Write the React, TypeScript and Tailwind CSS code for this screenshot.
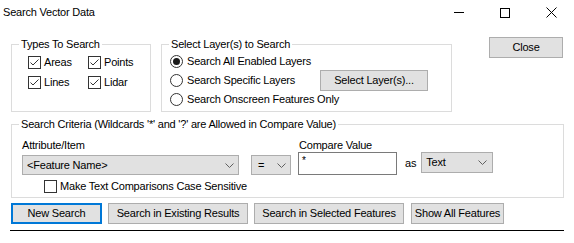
import React from "react";

const Chevron = () => (
  <svg width="9" height="5" viewBox="0 0 9 5" className="shrink-0">
    <polyline points="0.5,0.5 4.5,4.5 8.5,0.5" fill="none" stroke="#606060" strokeWidth="1" />
  </svg>
);

const Check = ({ checked, label }: { checked: boolean; label: string }) => (
  <div className="flex items-center h-[20px]">
    <div className="w-[13px] h-[13px] border border-[#333333] bg-white flex items-center justify-center shrink-0">
      {checked && (
        <svg width="11" height="11" viewBox="0 0 11 11">
          <polyline points="1.5,5.5 4,8 9.5,2.5" fill="none" stroke="#333333" strokeWidth="1" />
        </svg>
      )}
    </div>
    <span className="ml-[3px]">{label}</span>
  </div>
);

const Radio = ({ checked, label }: { checked: boolean; label: string }) => (
  <div className="flex items-center">
    <div className="w-[13px] h-[13px] rounded-full border border-[#333333] bg-white flex items-center justify-center shrink-0">
      {checked && <div className="w-[7px] h-[7px] rounded-full bg-[#1a1a1a]" />}
    </div>
    <span className="ml-[4px]">{label}</span>
  </div>
);

const Group = ({
  title,
  className,
  children,
}: {
  title: string;
  className: string;
  children: React.ReactNode;
}) => (
  <div className={"relative border border-[#dcdcdc] " + className}>
    <span className="absolute -top-[7px] left-[7px] px-[2px] bg-white leading-[13px] whitespace-nowrap">
      {title}
    </span>
    {children}
  </div>
);

const Btn = ({ label, className }: { label: string; className: string }) => (
  <button
    className={
      "h-[21px] bg-[#e1e1e1] border border-[#adadad] flex items-center justify-center leading-[13px] " +
      className
    }
  >
    {label}
  </button>
);

export default function App() {
  return (
    <div className="w-[574px] h-[243px] bg-white text-black text-[11px] leading-[13px] tracking-[-0.2px] font-['Liberation_Sans',Arial,sans-serif] overflow-hidden">
      {/* title bar */}
      <div className="flex h-[25px] items-center">
        <span className="pl-[3px] text-[11px]">Search Vector Data</span>
        <div className="ml-auto flex h-full">
          <div className="w-[46px] flex items-center justify-center">
            <div className="w-[10px] h-px bg-black" />
          </div>
          <div className="w-[46px] flex items-center justify-center">
            <div className="w-[10px] h-[10px] border border-black" />
          </div>
          <div className="w-[46px] flex items-center justify-center">
            <svg width="11" height="11" viewBox="0 0 11 11">
              <path d="M0.5 0.5 L10.5 10.5 M10.5 0.5 L0.5 10.5" stroke="black" strokeWidth="1" />
            </svg>
          </div>
        </div>
      </div>

      {/* top row */}
      <div className="flex items-start mt-[12px] pl-[11px]">
        <Group title="Types To Search" className="mt-[7px] w-[140px] h-[68px]">
          <div className="grid grid-cols-[60px_1fr] pt-[7px] pl-[16px]">
            <Check checked label="Areas" />
            <Check checked label="Points" />
            <Check checked label="Lines" />
            <Check checked label="Lidar" />
          </div>
        </Group>

        <Group title="Select Layer(s) to Search" className="ml-[10px] mt-[7px] w-[291px] h-[68px]">
          <div className="flex flex-col pt-[10px] pl-[8px] gap-[6px]">
            <Radio checked label="Search All Enabled Layers" />
            <div className="flex items-center h-[13px]">
              <div className="w-[150px]">
                <Radio checked={false} label="Search Specific Layers" />
              </div>
              <Btn label="Select Layer(s)..." className="w-[108px]" />
            </div>
            <Radio checked={false} label="Search Onscreen Features Only" />
          </div>
        </Group>

        <Btn label="Close" className="ml-auto mr-[11px] w-[74px]" />
      </div>

      {/* search criteria */}
      <Group
        title="Search Criteria (Wildcards '*' and '?' are Allowed in Compare Value)"
        className="mt-[12px] ml-[11px] w-[553px] h-[74px]"
      >
        <div className="pt-[14px] pl-[10px]">
          <div className="flex">
            <span className="w-[277px]">Attribute/Item</span>
            <span>Compare Value</span>
          </div>
          <div className="flex items-start">
            <div className="mt-[3px] w-[217px] h-[20px] bg-[#e1e1e1] border border-[#adadad] flex items-center pl-[4px] pr-[4px]">
              <span className="flex-1">&lt;Feature Name&gt;</span>
              <Chevron />
            </div>
            <div className="mt-[3px] ml-[12px] w-[40px] h-[20px] bg-[#e1e1e1] border border-[#adadad] flex items-center pl-[6px] pr-[4px]">
              <span className="flex-1">=</span>
              <Chevron />
            </div>
            <div className="ml-[7px] w-[99px] h-[23px] border border-[#7a7a7a] bg-white pl-[3px] pt-[1px] text-[10px]">
              *
            </div>
            <span className="ml-[8px] self-center">as</span>
            <div className="ml-[5px] w-[72px] h-[21px] bg-[#e1e1e1] border border-[#adadad] flex items-center pl-[4px] pr-[5px]">
              <span className="flex-1">Text</span>
              <Chevron />
            </div>
          </div>
          <div className="mt-[5px] ml-[22px] flex items-center">
            <div className="w-[13px] h-[13px] border border-[#333333] bg-white" />
            <span className="ml-[3px]">Make Text Comparisons Case Sensitive</span>
          </div>
        </div>
      </Group>

      {/* buttons */}
      <div className="flex mt-[5px] ml-[11px]">
        <Btn label="New Search" className="w-[91px] !border-2 !border-[#0078d7]" />
        <Btn label="Search in Existing Results" className="ml-[6px] w-[140px]" />
        <Btn label="Search in Selected Features" className="ml-[6px] w-[150px]" />
        <Btn label="Show All Features" className="ml-[7px] w-[93px]" />
      </div>
      <div className="mt-[6px] ml-[10px] w-[554px] h-px bg-black" />
    </div>
  );
}
